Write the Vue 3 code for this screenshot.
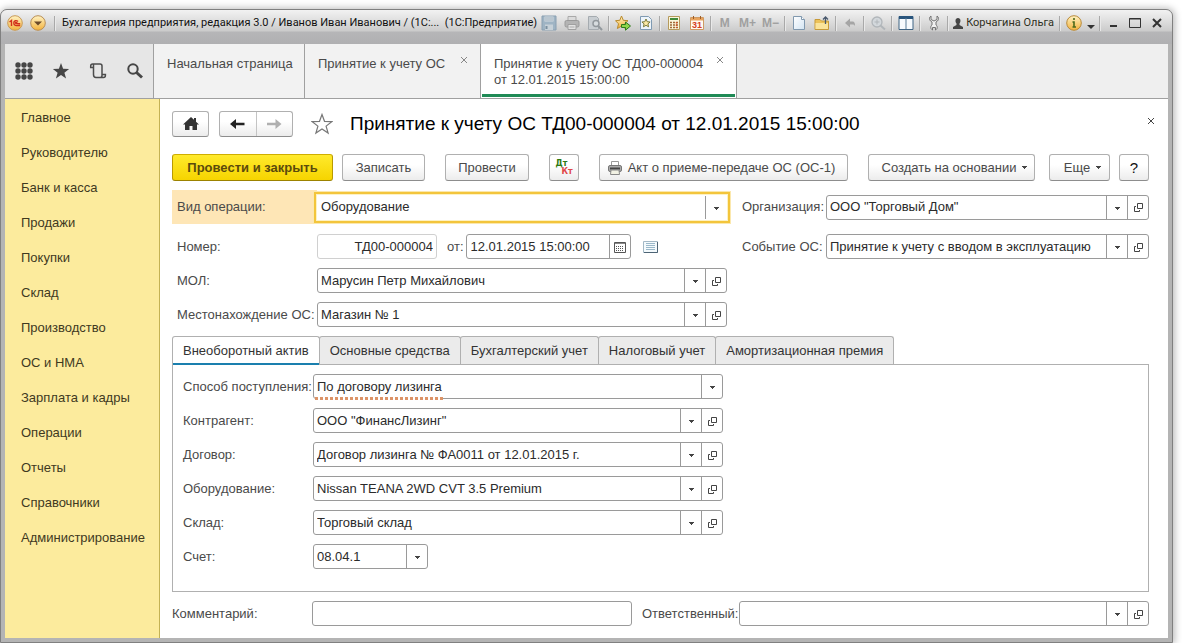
<script setup>
import { ref } from 'vue'

const sections = [
  'Главное', 'Руководителю', 'Банк и касса', 'Продажи', 'Покупки', 'Склад', 'Производство',
  'ОС и НМА', 'Зарплата и кадры', 'Операции', 'Отчеты', 'Справочники', 'Администрирование',
]

const toolGroups = [
  [
    { id: 'save', label: 'Сохранить' },
    { id: 'print', label: 'Печать' },
    { id: 'preview', label: 'Предварительный просмотр' },
  ],
  [
    { id: 'fav-add', label: 'Добавить в избранное' },
    { id: 'fav-list', label: 'Избранное' },
  ],
  [
    { id: 'calc', label: 'Калькулятор' },
    { id: 'calendar', label: 'Календарь' },
  ],
  [
    { id: 'm', label: 'Память', text: 'M' },
    { id: 'mplus', label: 'Добавить в память', text: 'M+' },
    { id: 'mminus', label: 'Вычесть из памяти', text: 'M−' },
  ],
  [
    { id: 'doc', label: 'Новый документ' },
    { id: 'folder', label: 'Открыть файл' },
  ],
  [{ id: 'undo', label: 'Назад' }],
  [{ id: 'zoom', label: 'Масштаб' }],
  [{ id: 'panels', label: 'Панели' }],
  [{ id: 'wrench', label: 'Настройка' }],
]

const quickTools = [
  { id: 'grid', label: 'Все функции' },
  { id: 'star', label: 'Избранное' },
  { id: 'history', label: 'История' },
  { id: 'search', label: 'Поиск' },
]

const people = [
  { id: 'mol', label: 'МОЛ:', value: 'Марусин Петр Михайлович' },
  { id: 'place', label: 'Местонахождение ОС:', value: 'Магазин № 1' },
]

const assetFields = [
  { id: 'method', label: 'Способ поступления:', value: 'По договору лизинга', flagged: true },
  { id: 'partner', label: 'Контрагент:', value: 'ООО "ФинансЛизинг"', open: true },
  { id: 'contract', label: 'Договор:', value: 'Договор лизинга № ФА0011 от 12.01.2015 г.', open: true },
  { id: 'equipment', label: 'Оборудование:', value: 'Nissan TEANA 2WD CVT 3.5 Premium', open: true },
  { id: 'store', label: 'Склад:', value: 'Торговый склад', open: true },
  { id: 'account', label: 'Счет:', value: '08.04.1', short: true },
]

const pages = ['Внеоборотный актив', 'Основные средства', 'Бухгалтерский учет', 'Налоговый учет', 'Амортизационная премия']
const activePage = ref(0)
const number = ref('ТД00-000004')
const date = ref('12.01.2015 15:00:00')
const comment = ref('')
</script>

<template>
  <svg class="defs" aria-hidden="true">
    <defs>
      <linearGradient id="gold" x1="0" y1="0" x2="0" y2="1">
        <stop offset="0" stop-color="#fff3c4" />
        <stop offset="1" stop-color="#f3b23c" />
      </linearGradient>
      <linearGradient id="sheet" x1="0" y1="0" x2="1" y2="1">
        <stop offset="0" stop-color="#ffffff" />
        <stop offset="1" stop-color="#d3e4f2" />
      </linearGradient>
    </defs>
    <symbol id="i-save" viewBox="0 0 16 16">
      <path d="M1 1h14v14H1z" fill="#9fb4c4" stroke="#8aa0b2" />
      <path d="M3.500 1.500h9v5h-9z" fill="#d5dde3" /><path d="M4 3h8M4 5h8" stroke="#9fb0bd" />
      <path d="M4 9.500h8V15H4z" fill="#c7d1d8" /><path d="M5.500 11v3" stroke="#7b90a1" stroke-width="2" />
    </symbol>
    <symbol id="i-print" viewBox="0 0 16 16">
      <path d="M4 1.500h8V6H4z" fill="#dcdcdc" stroke="#a9a9a9" />
      <rect x="1" y="5.500" width="14" height="6.500" rx="1.500" fill="#b4b4b4" stroke="#9a9a9a" />
      <path d="M4 9.500h8v5H4z" fill="#e2e2e2" stroke="#a0a0a0" /><path d="M5.500 12h5" stroke="#aaa" />
    </symbol>
    <symbol id="i-preview" viewBox="0 0 16 16">
      <path d="M1.500 1.500h8l2 2v11h-10z" fill="#c9ced2" stroke="#a5abb0" />
      <circle cx="9" cy="8.500" r="3" fill="#d7dcdf" stroke="#92989d" stroke-width="1.500" />
      <path d="m11.200 11 3.800 4" stroke="#92989d" stroke-width="2" />
    </symbol>
    <symbol id="i-fav-add" viewBox="0 0 16 16">
      <path d="m6.500 1 1.800 4.300 4.700.4-3.500 3.100 1 4.700-4-2.500-4.100 2.500 1.100-4.700L.5 5.700l4.300-.4z" fill="url(#gold)" stroke="#b98a2c" />
      <path d="M6.500 9.500h4V7l5 4-5 4.200v-2.700h-4z" fill="#8fd64b" stroke="#2f7a1c" />
    </symbol>
    <symbol id="i-fav-list" viewBox="0 0 16 16">
      <path d="M2.500 1.500h8l3 3v10h-11z" fill="#eef5fb" stroke="#7f9ab2" />
      <path d="m8 4 1.200 2.700 2.900.3-2.200 1.900.7 2.900L8 10.300l-2.600 1.500.7-2.900L3.900 7l2.900-.3z" fill="#fbe9a6" stroke="#7b7a3a" />
    </symbol>
    <symbol id="i-calc" viewBox="0 0 16 16">
      <path d="M2.500 1.500h11v13h-11z" fill="#fbf6dc" stroke="#b59a5c" />
      <path d="M4 4h8" stroke="#3f8a3a" stroke-width="2" />
      <path d="M4 7.500h8M4 10h8M4 12.500h8" stroke="#a06a3a" stroke-width="1.500" stroke-dasharray="2 1" />
      <path d="M10.500 7v6" stroke="#d2562c" stroke-width="1.500" stroke-dasharray="1.500 1" />
    </symbol>
    <symbol id="i-calendar" viewBox="0 0 16 16">
      <path d="M1.500 2.500h13v12h-13z" fill="#fffaf2" stroke="#cf9a63" />
      <path d="M2 3h12v2.500H2z" fill="#e9a45e" /><path d="M4.500 1v3M11.500 1v3" stroke="#9a5c28" />
      <text x="8" y="13" text-anchor="middle" font-family="Liberation Sans" font-size="9" font-weight="700" fill="#d5401c">31</text>
    </symbol>
    <symbol id="i-doc" viewBox="0 0 16 16">
      <path d="M2.500 1.500h8l3 3v10h-11z" fill="url(#sheet)" stroke="#8098ae" /><path d="M10.500 1.500v3h3" fill="#fff" stroke="#8098ae" />
    </symbol>
    <symbol id="i-folder" viewBox="0 0 16 16">
      <path d="M1 4.500h5l1.500 1.500h7v8.500H1z" fill="#ecc25a" stroke="#c79a38" />
      <path d="M1.500 8h12.500v6H1.500z" fill="#fae39a" />
      <path d="M11.500 9V2M9 4.500 11.500 2 14 4.500" fill="none" stroke="#48586c" stroke-width="1.300" />
    </symbol>
    <symbol id="i-undo" viewBox="0 0 16 16">
      <path d="M3 8l5-4.500V6.500h2.500c2 0 2.500 1.500 2.500 4.500-.8-1.300-1.500-1.500-2.500-1.500H8v3z" fill="#a5a5a5" />
    </symbol>
    <symbol id="i-zoom" viewBox="0 0 16 16">
      <circle cx="7" cy="7" r="5" fill="#d3d8dc" stroke="#b1b6ba" stroke-width="1.300" />
      <path d="M4.500 7h5M7 4.500v5" stroke="#b1b6ba" /><path d="m10.500 10.500 4.500 4" stroke="#b1b6ba" stroke-width="2" />
    </symbol>
    <symbol id="i-panels" viewBox="0 0 16 16">
      <path d="M1 1.500h14v13H1z" fill="#f6fafd" stroke="#3f6484" /><path d="M1 2.500h14" stroke="#28547c" stroke-width="3" />
      <path d="M8 3v11" stroke="#5b7c98" />
    </symbol>
    <symbol id="i-wrench" viewBox="0 0 16 16">
      <path d="M5 1v3.500L8 6l3-1.500V1c1.800 1 2 3.500.5 5L10 7v3c1.700 1 1.700 4-.5 5v-2.500h-3V15c-2.200-1-2.200-4-.5-5V7L4.500 6C3 4.500 3.200 2 5 1z" fill="#f0f0f0" stroke="#737373" />
    </symbol>
    <symbol id="i-grid" viewBox="0 0 18 18">
      <g fill="#464646">
        <circle v-for="n in 9" :key="n" :cx="3 + ((n - 1) % 3) * 6" :cy="3 + Math.floor((n - 1) / 3) * 6" r="2.700" />
      </g>
    </symbol>
    <symbol id="i-star" viewBox="0 0 18 18">
      <path d="m9 1 2.100 5.700 6 .2-4.700 3.800 1.700 5.800L9 13.100l-5.100 3.400 1.700-5.800L.9 6.900l6-.2z" fill="#464646" />
    </symbol>
    <symbol id="i-history" viewBox="0 0 18 18">
      <path d="M4.500 5.500H1.700V4c0-1.200.8-2 2-2H11c1.500 0 2 .8 2 2v9.500M4.500 2.500v10c0 2 .8 3 2.500 3h7.500c1.300 0 1.900-.7 1.900-2V12.500h-3M11 15.500c1.500 0 2-1 2-2" fill="none" stroke="#4c4c4c" stroke-width="1.500" />
    </symbol>
    <symbol id="i-search" viewBox="0 0 18 18">
      <circle cx="7" cy="7" r="4.700" fill="none" stroke="#464646" stroke-width="2" /><path d="m10.500 10.500 5.500 5" stroke="#464646" stroke-width="3" />
    </symbol>
    <symbol id="i-arrow" viewBox="0 0 5 3"><path d="M0 0h5v1H4v1H3v1H2V2H1V1H0z" fill="#444" /></symbol>
    <symbol id="i-open" viewBox="0 0 10 10">
      <path d="M4.500.5h5v5h-5zM3 3.500H1.500v5h5V7" fill="none" stroke="#444" />
    </symbol>
    <symbol id="i-close" viewBox="0 0 8 8"><path d="m1 1 6 6M7 1 1 7" fill="none" stroke="currentColor" /></symbol>
  </svg>

  <div class="page">
    <div class="window">
      <header class="titlebar">
        <button class="orb" aria-label="1С">
          <svg width="16" height="16" viewBox="0 0 16 16"><circle cx="8" cy="8" r="7.300" fill="url(#gold)" stroke="#c99a55" /><path d="M2.500 7 4.500 5.500V11M11 6.500C9.500 5 6.800 5.500 6.800 8s2 2.800 6.400 2.500M10.300 8c-1-.8-1.800-.5-1.800 0s.5.900 4.700.8" fill="none" stroke="#d2301c" stroke-width="1.400" /></svg>
        </button>
        <button class="orb" aria-label="Главное меню">
          <svg width="16" height="16" viewBox="0 0 16 16"><circle cx="8" cy="8" r="7.300" fill="url(#gold)" stroke="#b98e56" /><path d="M4 6.500h8L8 10.500z" fill="#6b4a2a" /></svg>
        </button>
        <span class="sep"></span>
        <span class="caption">Бухгалтерия предприятия, редакция 3.0 / Иванов Иван Иванович / (1С:...&nbsp; (1С:Предприятие)</span>
        <div class="systools">
          <template v-for="(group, g) in toolGroups" :key="g">
            <button v-for="tool in group" :key="tool.id" class="tool" :aria-label="tool.label">
              <template v-if="tool.text">{{ tool.text }}</template>
              <svg v-else width="16" height="16"><use :href="'#i-' + tool.id" /></svg>
            </button>
            <span class="sep"></span>
          </template>
          <button class="user">
            <svg width="10" height="11" viewBox="0 0 10 11"><path d="M5 0c3 0 3 4 1.500 5.500V7L10 9v2H0V9l3.500-2V5.500C2 4 2 0 5 0z" fill="#444" /></svg>
            Корчагина Ольга
          </button>
          <span class="sep"></span>
          <button class="tool" aria-label="Информация">
            <svg width="16" height="16" viewBox="0 0 16 16"><circle cx="8" cy="8" r="7.300" fill="url(#gold)" stroke="#b98a3a" /><path d="M8 3v2M6.500 7H8v5M6.500 12h3.500" fill="none" stroke="#4c6a1c" stroke-width="1.600" /></svg>
          </button>
          <button class="more" aria-label="Еще команды"><svg width="8" height="4" viewBox="0 0 8 4"><path d="M0 0h8L4 4z" fill="#333" /></svg></button>
          <span class="sep"></span>
          <button class="winbtn" aria-label="Свернуть"><svg width="12" height="12"><path d="M3 9h7" stroke="#333" stroke-width="2" /></svg></button>
          <button class="winbtn" aria-label="Развернуть"><svg width="12" height="12"><path d="M.5 1.500h11v9H.5zM0 2h12" fill="none" stroke="#333" /></svg></button>
          <button class="winbtn" aria-label="Закрыть"><svg width="12" height="12"><path d="m2 2 8 8M10 2l-8 8" stroke="#333" stroke-width="2" /></svg></button>
        </div>
      </header>

      <nav class="tabbar">
        <div class="quick">
          <button v-for="tool in quickTools" :key="tool.id" :aria-label="tool.label">
            <svg width="18" height="18"><use :href="'#i-' + tool.id" /></svg>
          </button>
        </div>
        <div class="wtab start"><a href="#">Начальная страница</a></div>
        <div class="wtab list">
          <a href="#">Принятие к учету ОС</a>
          <button class="tabclose" aria-label="Закрыть вкладку"><svg width="8" height="8"><use href="#i-close" /></svg></button>
        </div>
        <div class="wtab current">
          <a href="#">Принятие к учету ОС ТД00-000004<br>от 12.01.2015 15:00:00</a>
          <button class="tabclose" aria-label="Закрыть вкладку"><svg width="8" height="8"><use href="#i-close" /></svg></button>
        </div>
      </nav>

      <div class="body">
        <aside class="sidebar">
          <a v-for="name in sections" :key="name" href="#">{{ name }}</a>
        </aside>

        <main class="main">
          <div class="heading">
            <button class="btn home" aria-label="Начальная страница">
              <svg width="16" height="14" viewBox="0 0 16 14"><path d="M8 0l3 2.800V1h2v3.700L16 7.500h-2V13H9.500V9h-3v4H2V7.500H0z" fill="#333" /></svg>
            </button>
            <div class="history">
              <button aria-label="Назад"><svg width="15" height="10" viewBox="0 0 15 10"><path d="M6 0v3.800h8.500v2.400H6V10L0 5z" fill="#222" /></svg></button>
              <button aria-label="Вперед"><svg width="15" height="10" viewBox="0 0 15 10"><path d="M8.500 0v3.800H0v2.400h8.500V10l6-5z" fill="#b0b0b0" /></svg></button>
            </div>
            <button class="favorite" aria-label="Добавить в избранное">
              <svg width="22" height="22" viewBox="0 0 22 22"><path d="m11 1.500 2.500 6.800 7.300.3-5.700 4.500 2 7L11 16l-6.100 4.100 2-7-5.700-4.500 7.300-.3z" fill="#fff" stroke="#777" stroke-width="1.200" /></svg>
            </button>
            <h1>Принятие к учету ОС ТД00-000004 от 12.01.2015 15:00:00</h1>
            <button class="formclose" aria-label="Закрыть"><svg width="8" height="8"><use href="#i-close" /></svg></button>
          </div>

          <div class="commands">
            <button class="btn primary">Провести и закрыть</button>
            <button class="btn write">Записать</button>
            <button class="btn post">Провести</button>
            <button class="btn square dtkt" aria-label="Показать проводки"><span class="dt">Дт</span><span class="kt">Кт</span></button>
            <button class="btn act">
              <svg width="14" height="14" viewBox="0 0 14 14"><path d="M3.500.5h7v5h-7z" fill="#fff" stroke="#999" /><rect x=".5" y="4.500" width="13" height="6" rx="1.500" fill="#aaa" stroke="#777" /><path d="M2 7.500h10" stroke="#444" stroke-width="2" /><path d="M3 9h8l.5 4.500h-9z" fill="#f2f2e4" stroke="#888" /></svg>
              Акт о приеме-передаче ОС (ОС-1)
            </button>
            <button class="btn create">Создать на основании <svg width="5" height="3"><use href="#i-arrow" /></svg></button>
            <button class="btn others">Еще <svg width="5" height="3"><use href="#i-arrow" /></svg></button>
            <button class="btn square help" aria-label="Справка">?</button>
          </div>

          <div class="form">
            <div class="row head marked">
              <label for="kind">Вид операции:</label>
              <div class="field focused">
                <select id="kind"><option>Оборудование</option></select>
                <span class="drop"><svg width="5" height="3"><use href="#i-arrow" /></svg></span>
              </div>
            </div>
            <div class="row side tall">
              <label for="org">Организация:</label>
              <div class="field open">
                <select id="org"><option>ООО "Торговый Дом"</option></select>
                <span class="drop"><svg width="5" height="3"><use href="#i-arrow" /></svg></span>
                <button class="cell" aria-label="Открыть"><svg width="10" height="10"><use href="#i-open" /></svg></button>
              </div>
            </div>
            <div class="row head">
              <label for="number">Номер:</label>
              <div class="numdate">
                <input id="number" v-model="number" class="box number" type="text">
                <label for="date">от:</label>
                <div class="field date">
                  <input id="date" v-model="date" type="text">
                  <button class="cell" aria-label="Выбрать дату">
                    <svg width="12" height="11" viewBox="0 0 12 11"><path d="M.5.500h11v10H.5z" fill="none" stroke="#555" /><path d="M1 1.500h10" stroke="#888" /><path d="M2 4.500h8M2 6.500h8M2 8.500h8" stroke="#555" stroke-dasharray="1 1" /></svg>
                  </button>
                </div>
                <button class="status" aria-label="Состояние">
                  <svg width="15" height="12" viewBox="0 0 15 12"><path d="M.5.500h14v11H.5z" fill="#f4fafd" stroke="#a3b8c6" /><path d="M14.500 1v10.500H1" fill="none" stroke="#4d6475" /><path d="M3 2.500h9M3 4.500h9M3 6.500h9M3 8.500h9" stroke="#9ab8ca" /></svg>
                </button>
              </div>
            </div>
            <div class="row side">
              <label for="event">Событие ОС:</label>
              <div class="field open">
                <select id="event"><option>Принятие к учету с вводом в эксплуатацию</option></select>
                <span class="drop"><svg width="5" height="3"><use href="#i-arrow" /></svg></span>
                <button class="cell" aria-label="Открыть"><svg width="10" height="10"><use href="#i-open" /></svg></button>
              </div>
            </div>
            <div v-for="item in people" :key="item.id" class="row head first-col">
              <label :for="item.id">{{ item.label }}</label>
              <div class="field open">
                <select :id="item.id"><option>{{ item.value }}</option></select>
                <span class="drop"><svg width="5" height="3"><use href="#i-arrow" /></svg></span>
                <button class="cell" aria-label="Открыть"><svg width="10" height="10"><use href="#i-open" /></svg></button>
              </div>
            </div>
          </div>

          <div class="pages" role="tablist">
            <button
              v-for="(page, p) in pages" :key="page" role="tab" :aria-selected="p === activePage"
              :class="{ active: p === activePage }" @click="activePage = p"
            >{{ page }}</button>
          </div>
          <section class="panel">
            <div v-for="item in assetFields" :key="item.id" class="row asset">
              <label :for="item.id">{{ item.label }}</label>
              <div class="field" :class="{ open: item.open, flagged: item.flagged, short: item.short }">
                <select :id="item.id"><option>{{ item.value }}</option></select>
                <span class="drop"><svg width="5" height="3"><use href="#i-arrow" /></svg></span>
                <button v-if="item.open" class="cell" aria-label="Открыть"><svg width="10" height="10"><use href="#i-open" /></svg></button>
              </div>
            </div>
          </section>

          <footer class="footer">
            <label for="comment" class="comment-label">Комментарий:</label>
            <input id="comment" v-model="comment" class="box comment" type="text">
            <label for="responsible" class="resp-label">Ответственный:</label>
            <div class="field open resp">
              <select id="responsible"><option></option></select>
              <span class="drop"><svg width="5" height="3"><use href="#i-arrow" /></svg></span>
              <button class="cell" aria-label="Открыть"><svg width="10" height="10"><use href="#i-open" /></svg></button>
            </div>
          </footer>
        </main>
      </div>
    </div>
  </div>
</template>

<style>
body {
  background: #fff;
}
</style>

<style scoped>
* {
  box-sizing: border-box;
}
.defs {
  position: absolute;
  width: 0;
  height: 0;
}
.page {
  display: flex;
  min-height: 100vh;
  padding: 9px 9px 0 0;
  font: 13px/16px "Liberation Sans", Arial, sans-serif;
  color: #4a4a4a;
}
button, input, select {
  margin: 0;
  padding: 0;
  border: 0;
  background: none;
  font: inherit;
  color: inherit;
}
button {
  display: flex;
  align-items: center;
  justify-content: center;
  white-space: nowrap;
}
a {
  color: inherit;
  text-decoration: none;
}
svg {
  display: block;
  flex: none;
}
.window {
  flex: 1;
  min-width: 0;
  display: flex;
  flex-direction: column;
  padding: 0 4px 4px;
  border: 1px solid #808080;
  border-radius: 7px 7px 0 0;
  background: #b4b4b4;
  box-shadow: 1px 0 7px 1px #bdbdbd;
}

/* title bar */
.titlebar {
  display: flex;
  align-items: center;
  height: 34px;
  margin: 0 -4px;
  padding: 0 4px 8px 5px;
  border-radius: 6px 6px 0 0;
  background: linear-gradient(#f2f2f2, #e2e2e2 9px, #cbcbcb 21px, #b6b6b8 22px, #b0b0b2);
  font: 11px/16px Roboto, sans-serif;
  color: #111;
}
.orb {
  width: 23px;
  flex: none;
  padding-right: 6px;
}
.sep {
  flex: none;
  width: 1px;
  height: 15px;
  margin: 0 2px;
  background: #a9a9a9;
  box-shadow: 1px 0 #e9e9e9;
}
.caption {
  flex: 1;
  min-width: 0;
  padding-left: 5px;
  white-space: nowrap;
}
.systools {
  display: flex;
  align-items: center;
}
.tool {
  width: 23px;
  height: 20px;
  font: bold 12px/14px "Liberation Sans", sans-serif;
  color: #a0a0a0;
}
.user {
  gap: 3px;
  padding: 0 3px;
  color: #2f2f22;
}
.more {
  width: 12px;
  height: 12px;
  align-items: end;
}
.winbtn {
  width: 22px;
}

/* open window tabs */
.tabbar {
  display: flex;
  height: 55px;
  background: #efefef;
  border-bottom: 1px solid #a0a0a0;
}
.quick {
  display: flex;
  width: 149px;
  flex: none;
  background: #e6e6e6;
  border-right: 1px solid #a0a0a0;
}
.quick button {
  flex: 1;
}
.wtab {
  display: flex;
  justify-content: space-between;
  align-items: start;
  padding: 12px 12px 0 13px;
  border-right: 1px solid #a0a0a0;
  background: #f2f2f2;
  white-space: nowrap;
}
.start {
  width: 151px;
}
.list {
  width: 176px;
}
.current {
  width: 256px;
  background: #fff;
  box-shadow: inset 0 -1px #fff, inset 1px 0 #fff, inset -1px 0 #fff, inset 0 -4px #1f8a56;
}
.tabclose {
  color: #888;
}

.body {
  flex: 1;
  display: flex;
  background: #fff;
}
.sidebar {
  flex: none;
  width: 155px;
  padding: 1px 0 0 16px;
  border-right: 1px solid #c4b254;
  background: #fceb9d;
  color: #40391f;
}
.sidebar a {
  display: block;
  line-height: 35px;
  white-space: nowrap;
}
.main {
  flex: 1;
  min-width: 0;
  display: flex;
  flex-direction: column;
  padding: 12px 19px 12px 12px;
}

/* form heading */
.heading {
  display: flex;
  align-items: center;
  height: 26px;
}
.btn, .history {
  border: 1px solid #b0b0b0;
  border-bottom-color: #8d8d8d;
  border-radius: 3px;
  background: linear-gradient(#fff 40%, #ececec);
}
.home {
  width: 37px;
  height: 26px;
}
.history {
  display: flex;
  width: 74px;
  height: 26px;
  margin-left: 10px;
}
.history button {
  flex: 1;
}
.history button + button {
  border-left: 1px solid #c4c4c4;
}
.favorite {
  margin: 0 17px 0 18px;
}
h1 {
  margin: 0;
  font: 19px/24px "Liberation Sans", Arial, sans-serif;
  color: #000;
  white-space: nowrap;
}
.formclose {
  margin: 0 -6px 6px auto;
  color: #444;
}

/* command bar */
.commands {
  display: flex;
  height: 27px;
  margin-top: 17px;
}
.commands .btn {
  flex: none;
}
.commands .primary {
  width: 161px;
  border-color: #cfae00 #b99a00 #9c8200;
  background: linear-gradient(#ffea2c, #f6d400);
  font-weight: bold;
  color: #5b4a0c;
}
.write {
  width: 83px;
  margin-left: 9px;
}
.post {
  width: 84px;
  margin-left: 20px;
}
.square {
  width: 30px;
}
.dtkt {
  flex-direction: column;
  margin-left: 20px;
  font: bold 8px/8px "DejaVu Sans", sans-serif;
}
.dt {
  padding-right: 5px;
  color: #2c7a12;
}
.kt {
  padding-left: 6px;
  color: #e04848;
}
.act {
  gap: 6px;
  width: 249px;
  margin-left: 20px;
  padding-right: 4px;
}
.create {
  gap: 6px;
  width: 167px;
  margin-left: 20px;
  padding-left: 6px;
}
.others {
  gap: 6px;
  width: 61px;
  margin-left: auto;
  padding-left: 6px;
}
.help {
  margin-left: 9px;
  font-size: 15px;
  color: #111;
}

/* fields */
.form {
  display: grid;
  grid-template-columns: 555fr 407fr;
  gap: 9px 15px;
  margin-top: 9px;
}
.row {
  display: grid;
  align-items: center;
  min-width: 0;
}
.row label, .footer label {
  white-space: nowrap;
}
.head {
  grid-template-columns: 140px 1fr;
  padding-left: 5px;
}
.side {
  grid-template-columns: 84px 1fr;
}
.first-col {
  grid-column: 1;
}
.marked, .tall {
  height: 34px;
  margin-bottom: 1px;
}
.marked {
  background: linear-gradient(#fee6b6, #fee6b6) no-repeat 0 0 / 145px 100%;
}
.field {
  position: relative;
  display: grid;
  grid-template-columns: 1fr 21px;
  height: 25px;
  min-width: 0;
  border: 1px solid #9a9a9a;
  border-radius: 3px;
  background: #fff;
  color: #2b2b2b;
}
.field.open {
  grid-template-columns: 1fr 21px 21px;
}
.field select {
  grid-area: 1 / 1 / 2 / 3;
  min-width: 0;
  padding: 0 24px 0 3px;
  appearance: none;
  outline: 0;
}
.field input {
  min-width: 0;
  padding: 0 4px;
  outline: 0;
}
.drop {
  grid-area: 1 / 2;
  display: grid;
  place-items: center;
  padding-top: 2px;
  border-left: 1px solid #9a9a9a;
  pointer-events: none;
}
.cell {
  border-left: 1px solid #9a9a9a;
  padding-top: 2px;
}
.focused {
  border-color: #fff;
  border-radius: 0;
  box-shadow: 0 0 0 1px #fdf2c4, 0 0 0 3px #f3c53c, 0 0 0 4px #fbe8ae;
}
.numdate {
  display: flex;
  align-items: center;
  color: #4a4a4a;
}
.box {
  height: 25px;
  min-width: 0;
  padding: 0 3px;
  border: 1px solid #9a9a9a;
  border-radius: 3px;
  background: #fff;
  color: #2b2b2b;
}
.number {
  width: 120px;
  margin-right: 10px;
  border-color: #d0d0d0;
  text-align: right;
}
.date {
  width: 165px;
  margin-left: 2px;
}
.status {
  margin-left: 12px;
}

/* pages */
.pages {
  display: flex;
  height: 28px;
  margin-top: 9px;
}
.pages button {
  padding: 0 10px;
  margin-right: -1px;
  border: 1px solid #b0b0b0;
  border-bottom: 0;
  border-radius: 3px 3px 0 0;
  background: #ebebeb;
  color: #333;
}
.pages .active {
  position: relative;
  margin-bottom: -1px;
  background: #fff;
  box-shadow: inset 0 -2px #1a7fae;
}
.panel {
  flex: 1;
  display: grid;
  align-content: start;
  gap: 9px;
  padding: 9px 10px 22px;
  border: 1px solid #b0b0b0;
}
.asset {
  grid-template-columns: 130px 410px;
}
.short {
  width: 115px;
}
.flagged::after {
  content: "";
  position: absolute;
  left: 1px;
  bottom: -2px;
  width: 128px;
  height: 3px;
  background: repeating-linear-gradient(90deg, #dc9468 0 3px, #fff 3px 5px);
}
.footer {
  display: flex;
  align-items: center;
  margin-top: 9px;
}
.comment-label {
  flex: none;
  width: 140px;
}
.comment {
  flex: 320 1 320px;
}
.resp-label {
  flex: none;
  width: 97px;
  margin-left: 10px;
}
.resp {
  flex: 410 1 410px;
}
</style>
